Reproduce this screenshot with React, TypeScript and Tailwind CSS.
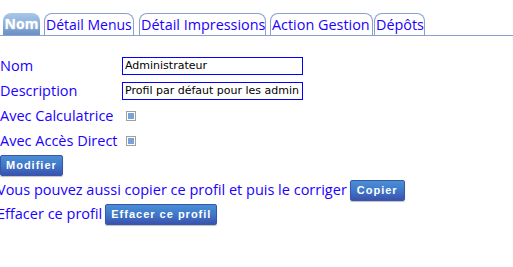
import React from 'react';

const tabs = [
  { t: 'Détail Menus', c: 'w-[90px] ml-[4px]' },
  { t: 'Détail Impressions', c: 'w-[127px] ml-[5px] text-[14.4px]' },
  { t: 'Action Gestion', c: 'w-[103px] ml-[4px] text-[14.4px]' },
  { t: 'Dépôts', c: 'w-[51px] ml-[1px] text-[14.4px]' },
];

const Btn: React.FC<{ label: string; className?: string }> = ({ label, className }) => (
  <button
    className={`h-[21px] px-[5px] rounded-[2px] border border-[#3a56a8] bg-gradient-to-b from-[#4a8ed6] via-[#3f78c8] to-[#3a52ae] text-white font-bold text-[11px] tracking-[1px] leading-none shadow-[0_1px_1px_rgba(0,0,0,0.25)] ${className ?? ''}`}
    style={{ fontFamily: '"Liberation Sans", Arial, sans-serif' }}
  >
    {label}
  </button>
);

const Check = () => (
  <span className="inline-block w-[10px] h-[10px] border border-[#a0a0a0] bg-white p-[1px] ml-[4px]">
    <span className="block w-full h-full bg-[#7aa2d6]" />
  </span>
);

export default function App() {
  return (
    <div
      className="w-[513px] h-[267px] bg-white text-[#2000ff] text-[14.5px] overflow-hidden"
      style={{ fontFamily: '"Open Sans", "DejaVu Sans", sans-serif' }}
    >
      <div className="pt-[13px] border-b border-[#8c9fd2] text-[14px]">
        <div className="flex items-end pl-[3px]">
          <div className="w-[37px] h-[22px] text-center rounded-t-[8px] bg-gradient-to-b from-[#a9c8ea] to-[#6a92c4] text-white font-bold leading-[22px] [text-shadow:0_0_2px_rgba(255,255,255,0.6)]">
            Nom
          </div>
          {tabs.map(({ t, c }) => (
            <div
              key={t}
              className={`h-[22px] pl-[1px] rounded-t-[8px] border border-b-0 border-[#8c9fd2] bg-white leading-[21px] whitespace-nowrap overflow-hidden ${c}`}
            >
              {t}
            </div>
          ))}
        </div>
      </div>

      <div className="pt-[17px]">
        <div className="flex items-center h-[25px]">
          <span className="w-[122px]">Nom</span>
          <input
            readOnly
            value="Administrateur"
            className="w-[181px] h-[18px] border border-[#0000ff] px-[2px] text-[11px] text-black outline-none"
            style={{ fontFamily: '"DejaVu Sans", sans-serif' }}
          />
        </div>
        <div className="flex items-center h-[25px]">
          <span className="w-[122px]">Description</span>
          <input
            readOnly
            value="Profil par défaut pour les admin"
            className="w-[181px] h-[18px] border border-[#0000ff] px-[2px] text-[11px] text-black outline-none"
            style={{ fontFamily: '"DejaVu Sans", sans-serif' }}
          />
        </div>
        <div className="flex items-center h-[25px]">
          <span className="w-[122px]">Avec Calculatrice</span>
          <Check />
        </div>
        <div className="flex items-center h-[25px]">
          <span className="w-[122px]">Avec Accès Direct</span>
          <Check />
        </div>
        <div className="h-[24px] flex items-start pt-[2px]">
          <Btn label="Modifier" />
        </div>
        <div className="flex items-center h-[24px] mt-[1px] -ml-[3px]">
          <span>Vous pouvez aussi copier ce profil et puis le corriger</span>
          <Btn label="Copier" className="ml-[3px] px-[6px]" />
        </div>
        <div className="flex items-center h-[24px] -ml-[3px]">
          <span>Effacer ce profil</span>
          <Btn label="Effacer ce profil" className="ml-[3px]" />
        </div>
      </div>
    </div>
  );
}
